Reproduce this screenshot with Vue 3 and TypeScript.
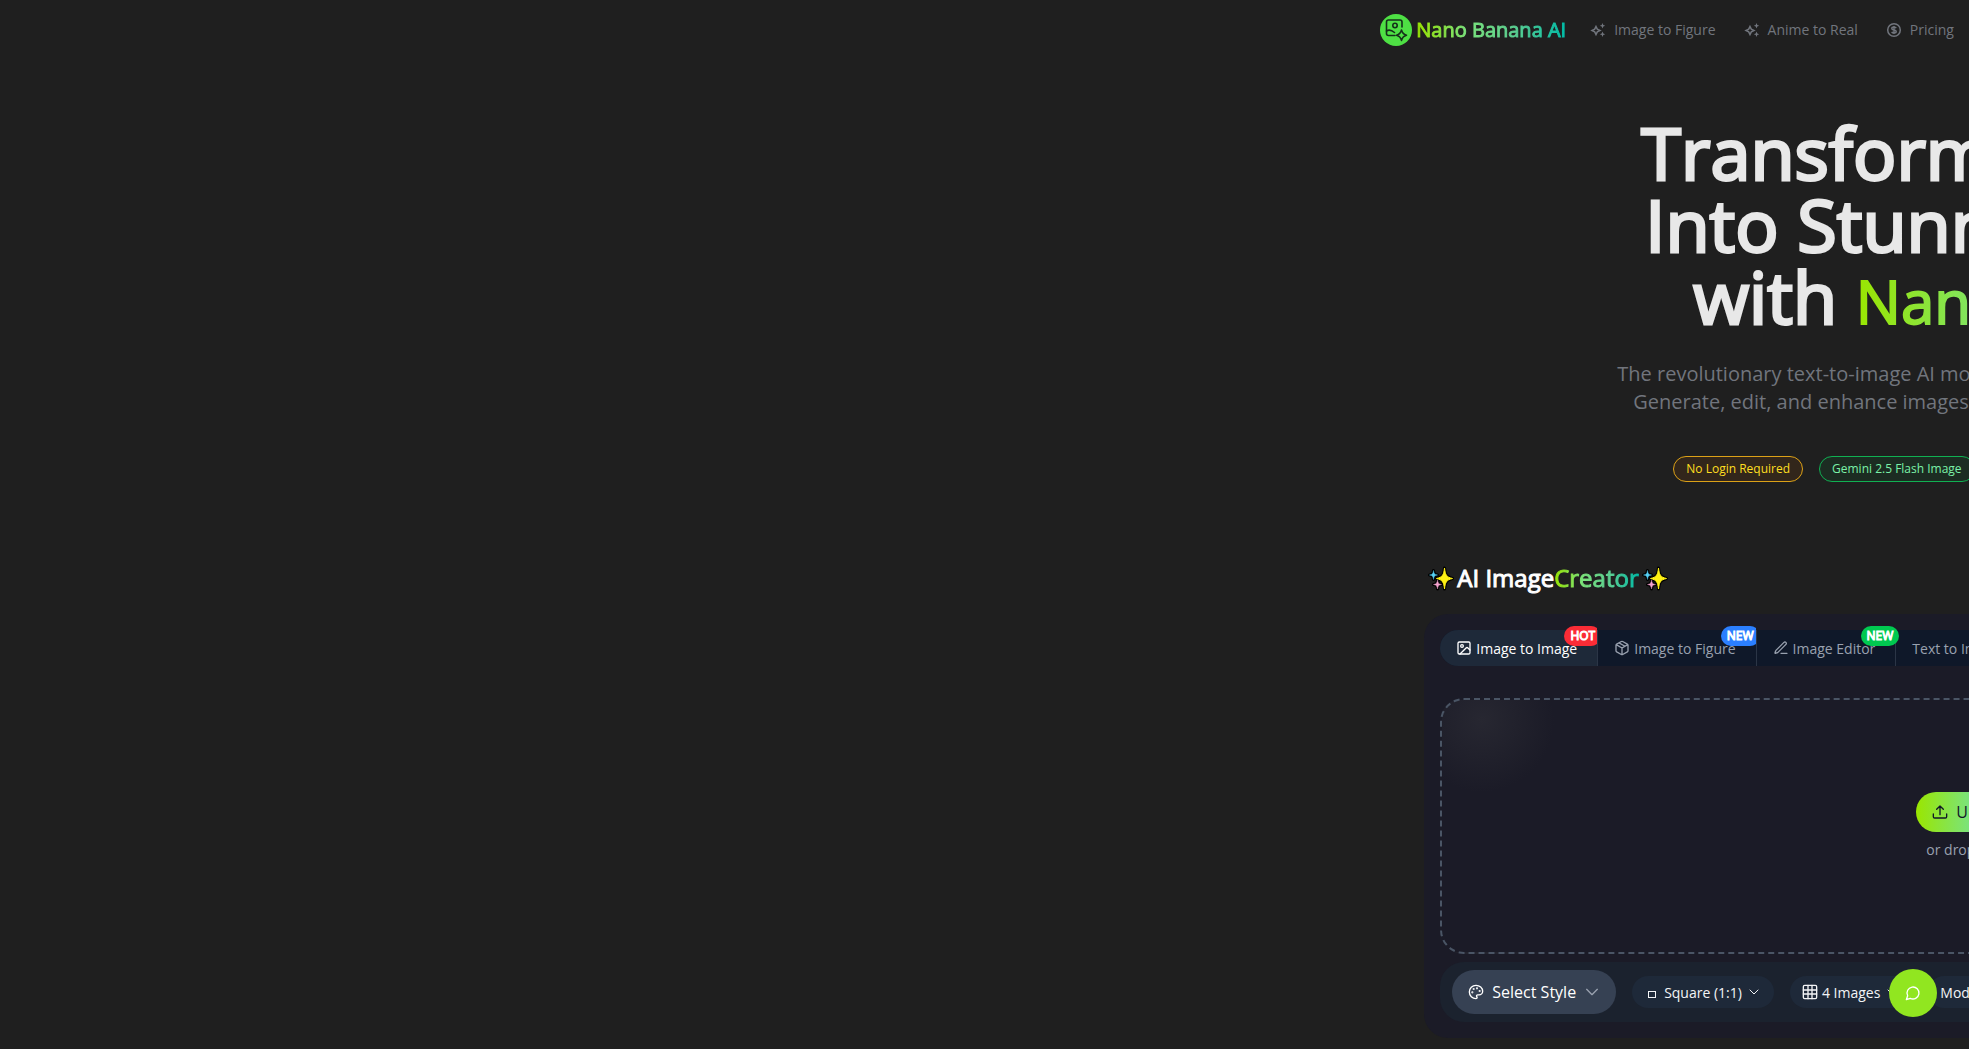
<script setup lang="ts">
interface NavItem { label: string; icon: 'sparkles' | 'coin' }
interface Tab { label: string; icon?: 'image' | 'box' | 'pen'; badge?: string; tone?: string; clipped?: boolean }

const navItems: NavItem[] = [
  { label: 'Image to Figure', icon: 'sparkles' },
  { label: 'Anime to Real', icon: 'sparkles' },
  { label: 'Pricing', icon: 'coin' },
]
const tabs: Tab[] = [
  { label: 'Image to Image', icon: 'image', badge: 'HOT', tone: 'red', clipped: true },
  { label: 'Image to Figure', icon: 'box', badge: 'NEW', tone: 'blue', clipped: true },
  { label: 'Image Editor', icon: 'pen', badge: 'NEW', tone: 'green' },
  { label: 'Text to Image' },
]
</script>

<template>
  <div class="page">
    <div class="shell">
      <header class="topbar">
        <a class="brand" href="#">
          <svg class="brand-logo" viewBox="0 0 32 32" fill="none" stroke="#15301a" stroke-width="1.6" stroke-linecap="round" stroke-linejoin="round">
            <circle cx="16" cy="16" r="16" fill="#4ee044" stroke="none" />
            <path d="M15 21.500H8.500a2 2 0 0 1-2-2V8a2 2 0 0 1 2-2H20a2 2 0 0 1 2 2v5" />
            <circle cx="15" cy="11.500" r="2.200" />
            <path d="M6.500 17c3-2 5-1 8 1.500" />
            <path d="M21.500 16c.8 3.200 2 4.400 5 5.200-3 .8-4.200 2-5 5.200-.8-3.200-2-4.400-5-5.200 3-.8 4.200-2 5-5.200Z" />
          </svg>
          <span class="gradient">Nano Banana AI</span>
        </a>
        <nav class="nav">
          <a v-for="item in navItems" :key="item.label" href="#">
            <svg v-if="item.icon === 'sparkles'" viewBox="0 0 16 16" fill="none" stroke="currentColor" stroke-width="1.500">
              <path d="M6 4.500 7.300 7.200 10 8.500 7.300 9.800 6 12.500 4.700 9.800 2 8.500 4.700 7.200Z" />
              <path d="m12.500 1 .8 1.900 1.900.8-1.900.8-.8 1.900-.8-1.900-1.900-.8 1.900-.8ZM12.500 9.500l.8 1.900 1.900.8-1.900.8-.8 1.900-.8-1.900-1.900-.8 1.900-.8Z" fill="currentColor" stroke="none" />
            </svg>
            <svg v-else viewBox="0 0 16 16" fill="none" stroke="currentColor" stroke-width="1.500">
              <circle cx="8" cy="8" r="6.300" />
              <path d="M10.200 6.200C9.800 5.400 9 5 8 5 6.700 5 5.800 5.600 5.800 6.600c0 2.200 4.400.8 4.400 2.900C10.200 10.400 9.300 11 8 11c-1 0-1.900-.4-2.300-1.200M8 4v8" />
            </svg>
            {{ item.label }}
          </a>
        </nav>
      </header>

      <section class="hero">
        <h1>
          <span class="line">Transform Your Ideas</span>
          <span class="line second">Into Stunning Images</span>
          <span class="line third">with <span class="gradient hero-name">Nano Banana AI</span></span>
        </h1>
        <p>
          <span class="line">The revolutionary text-to-image AI model that creates</span>
          <span class="line sub">Generate, edit, and enhance images with simple text</span>
        </p>
        <div class="pills">
          <span class="pill amber">No Login Required</span>
          <span class="pill green">Gemini 2.5 Flash Image</span>
        </div>
      </section>

      <main class="creator">
        <h2>
          <svg v-for="n in 2" :key="n" class="stars" :class="{ last: n === 2 }" viewBox="0 0 24 24">
            <g fill="#000" stroke="#000" stroke-width="3" stroke-linejoin="round">
              <path d="M15.500 2c.8 6.500 1.500 9 8 10.500-6.500 1.500-7.200 4-8 10.500-.8-6.500-1.500-9-8-10.500 6.500-1.500 7.200-4 8-10.500Z" />
              <path d="M4.500 4.500c.5 3 1 4 4 4.500-3 .5-3.500 1.500-4 4.500-.5-3-1-4-4-4.500 3-.5 3.500-1.500 4-4.500ZM8.500 14c.5 3 1 4 4 4.500-3 .5-3.500 1.500-4 4.500-.5-3-1-4-4-4.500 3-.5 3.500-1.500 4-4.500Z" />
            </g>
            <path fill="#fff114" stroke="#fff114" stroke-width="1" d="M15.500 2c.8 6.500 1.500 9 8 10.500-6.500 1.500-7.200 4-8 10.500-.8-6.500-1.500-9-8-10.500 6.500-1.500 7.200-4 8-10.500Z" />
            <path fill="#55d0f5" stroke="#55d0f5" stroke-width=".4" d="M4.500 4.500c.5 3 1 4 4 4.500-3 .5-3.500 1.500-4 4.500-.5-3-1-4-4-4.500 3-.5 3.500-1.500 4-4.500Z" />
            <path fill="#f5a3cf" stroke="#f5a3cf" stroke-width=".4" d="M8.500 14c.5 3 1 4 4 4.500-3 .5-3.500 1.500-4 4.500-.5-3-1-4-4-4.500 3-.5 3.500-1.500 4-4.500Z" />
          </svg>
          <span class="title">AI Image<span class="gradient creator-name">Creator</span></span>
        </h2>

        <div class="card">
          <div class="tabs" role="tablist">
            <button v-for="(tab, i) in tabs" :key="tab.label" type="button" role="tab" class="tab" :class="{ active: i === 0 }" :aria-selected="i === 0">
              <svg v-if="tab.icon" class="line-icon" viewBox="0 0 24 24">
                <template v-if="tab.icon === 'image'">
                  <rect x="3" y="3" width="18" height="18" rx="2" /><circle cx="9" cy="9" r="2" /><path d="m21 15-3.100-3.100a2 2 0 0 0-2.800 0L6 21" />
                </template>
                <template v-else-if="tab.icon === 'box'">
                  <path d="M11 21.700a2 2 0 0 0 2 0l7-4a2 2 0 0 0 1-1.700V8a2 2 0 0 0-1-1.700l-7-4a2 2 0 0 0-2 0l-7 4A2 2 0 0 0 3 8v8a2 2 0 0 0 1 1.700ZM12 22V12M3.300 7 12 12l8.700-5M7.500 4.300l9 5.100" />
                </template>
                <path v-else d="M12 20h9M16.400 3.600a1 1 0 0 1 3 3L7.400 18.600a2 2 0 0 1-.9.500l-2.900.9a.5.5 0 0 1-.6-.6l.9-2.900a2 2 0 0 1 .5-.9Z" />
              </svg>
              {{ tab.label }}
              <span v-if="tab.badge" class="badge-area" :class="{ clipped: tab.clipped }"><span class="badge" :class="tab.tone">{{ tab.badge }}</span></span>
            </button>
          </div>

          <div class="dropzone">
            <button type="button" class="upload">
              <svg class="line-icon" viewBox="0 0 24 24"><path d="M12 16V3M7 8l5-5 5 5M2 15v4a2 2 0 0 0 2 2h16a2 2 0 0 0 2-2v-4" /></svg>
              Upload Image
            </button>
            <span class="hint">or drop image here</span>
          </div>

          <div class="toolbar">
            <button type="button" class="style-button">
              <svg class="line-icon" viewBox="0 0 24 24">
                <path d="M12 2a10 10 0 0 0 0 20c1 0 1.700-.8 1.700-1.700 0-.5-.2-.8-.5-1.100-.3-.3-.4-.7-.4-1.100a1.600 1.600 0 0 1 1.700-1.700h2c3 0 5.500-2.500 5.500-5.500C22 6 17.500 2 12 2Z" />
                <circle cx="13.500" cy="6.500" r=".6" /><circle cx="17.500" cy="10.500" r=".6" /><circle cx="8.500" cy="7.500" r=".6" /><circle cx="6.500" cy="12.500" r=".6" />
              </svg>
              Select Style
              <svg class="line-icon muted" viewBox="0 0 24 24"><path d="m4 8 8 8 8-8" /></svg>
            </button>
            <button type="button" class="option">
              <span class="square"></span>
              Square (1:1)
              <svg class="line-icon chevron" viewBox="0 0 24 24"><path d="m4 8 8 8 8-8" /></svg>
            </button>
            <button type="button" class="option">
              <svg class="line-icon" viewBox="0 0 24 24"><rect x="2" y="2" width="20" height="20" rx="2" /><path d="M2 9h20M2 15h20M9 2v20M15 2v20" /></svg>
              4 Images
              <svg class="line-icon chevron" viewBox="0 0 24 24"><path d="m4 8 8 8 8-8" /></svg>
            </button>
            <button type="button" class="option">Model</button>
          </div>
        </div>
      </main>
    </div>

    <button type="button" class="chat" aria-label="Chat">
      <svg class="line-icon" viewBox="0 0 24 24"><path d="M7.900 20A9 9 0 1 0 4 16.100L2 22Z" /></svg>
    </button>
  </div>
</template>

<style>
body {
  margin: 0;
  background: #1f1f1f;
}
</style>

<style scoped>
.page {
  position: relative;
  min-height: 100vh;
  overflow: hidden;
  background: #1f1f1f;
  color: #e8e8e8;
  font-family: "Open Sans", "Noto Sans", sans-serif;
}
.page * { box-sizing: border-box; }
.shell {
  width: 1440px;
  margin-left: 70%;
}
button {
  border: 0;
  color: inherit;
  font: inherit;
  white-space: nowrap;
}
a { text-decoration: none; }
svg { flex: none; }
.line-icon {
  width: 16px;
  height: 16px;
  fill: none;
  stroke: currentColor;
  stroke-width: 2;
  stroke-linecap: round;
  stroke-linejoin: round;
}
.gradient {
  background: linear-gradient(90deg, #9ae600, #7be37a 33%, #5bcf92 66%, #00bba7);
  background-clip: text;
  color: transparent;
  -webkit-text-stroke-color: transparent;
}
.topbar {
  display: flex;
  align-items: center;
  gap: 24px;
  height: 60px;
}
.brand {
  display: flex;
  align-items: center;
  gap: 4px;
  margin-left: 2px;
  font-size: 20px;
  font-weight: 400;
  line-height: 28px;
  white-space: nowrap;
  -webkit-text-stroke-width: 1px;
}
.brand-logo {
  width: 32px;
  height: 32px;
}
.nav {
  display: flex;
  gap: 28px;
}
.nav a {
  display: flex;
  align-items: center;
  gap: 8px;
  padding-bottom: 1px;
  color: #71757d;
  font-size: 14px;
  line-height: 20px;
  white-space: nowrap;
}
.nav svg {
  width: 16px;
  height: 16px;
}
.line {
  display: block;
  white-space: nowrap;
}
.hero { padding: 56px 0 0 239px; }
h1 {
  margin: 0 0 0 24px;
  font-size: 72px;
  font-weight: 400;
  line-height: 72px;
  -webkit-text-stroke: 3px #e8e8e8;
}
.second { padding-left: 4px; }
.third { padding-left: 52px; }
.hero-name {
  font-size: 60px;
  line-height: 60px;
  -webkit-text-stroke: 2px transparent;
}
.hero p {
  margin: 28px 0 0;
  color: #71757d;
  font-size: 20px;
  line-height: 28px;
}
.sub { padding-left: 16px; }
.pills {
  display: flex;
  gap: 16px;
  margin: 40px 0 0 56px;
}
.pill {
  padding: 4px 12px;
  border: 1px solid;
  border-radius: 13px;
  font-size: 12px;
  line-height: 16px;
  white-space: nowrap;
}
.amber {
  border-color: #dca117;
  background: #32261b;
  color: #ffdf20;
}
.pill.green {
  border-color: #10b052;
  background: #1c2c22;
  color: #7bf1a8;
}
.creator { padding: 78px 0 0 46px; }
h2 {
  display: flex;
  align-items: center;
  gap: 4px;
  margin: 0 0 18px 5px;
  color: #fff;
  font-size: 24px;
  font-weight: 400;
  line-height: 36px;
}
.title { -webkit-text-stroke: 1px #fff; }
.stars {
  width: 24px;
  height: 24px;
  overflow: visible;
}
.last { order: 1; }
.creator-name { -webkit-text-stroke: 1px transparent; }
.card {
  padding: 16px;
  border-radius: 24px;
  background: #1b1b27;
}
.tabs {
  display: flex;
  width: 1000px;
  height: 36px;
  border-radius: 18px;
  background: #0f1829;
}
.tab {
  position: relative;
  display: flex;
  align-items: center;
  gap: 4px;
  padding: 0 20px 0 16px;
  border-right: 1px solid #2b3546;
  background: transparent;
  color: #99a1af;
  font-size: 14px;
}
.active {
  border-radius: 18px 0 0 18px;
  background: #1e2939;
  color: #fff;
}
.badge-area {
  position: absolute;
  inset: -4px -4px 0 auto;
  width: 48px;
  pointer-events: none;
}
.clipped {
  right: 0;
  width: 48px;
  overflow: hidden;
}
.badge {
  position: absolute;
  top: 0;
  right: 0;
  padding: 2px 6px;
  border-radius: 10px;
  color: #fff;
  font-size: 12px;
  line-height: 16px;
  -webkit-text-stroke: 1px #fff;
}
.clipped .badge { right: -4px; }
.red { background: #fb2c36; }
.blue { background: #2b7fff; }
.badge.green { background: #00c950; }
.dropzone {
  display: flex;
  flex-direction: column;
  align-items: flex-start;
  height: 256px;
  margin-top: 32px;
  padding: 92px 0 0 474px;
  border: 2px dashed #4a5565;
  border-radius: 24px;
  background: radial-gradient(circle at 40px 20px, #272731, #1b1b27 72px);
}
.upload {
  display: flex;
  align-items: center;
  gap: 8px;
  height: 40px;
  padding: 0 16px;
  border-radius: 20px;
  background: linear-gradient(90deg, #9ae600, #7be37a 33%, #5bcf92 66%, #00bba7);
  color: #111827;
  font-size: 16px;
}
.hint {
  margin: 8px 0 0 10px;
  color: #99a1af;
  font-size: 14px;
  line-height: 20px;
}
.toolbar {
  display: flex;
  align-items: center;
  gap: 16px;
  height: 60px;
  margin-top: 8px;
  padding: 0 12px;
  border-radius: 24px;
  background: #1b222e;
}
.style-button {
  display: flex;
  align-items: center;
  gap: 8px;
  height: 44px;
  padding: 0 16px;
  border-radius: 22px;
  background: #364153;
  color: #fff;
  font-size: 16px;
}
.muted { color: #99a1af; }
.option {
  display: flex;
  align-items: center;
  gap: 4px;
  height: 32px;
  padding: 0 12px;
  border-radius: 16px;
  background: #1e2939;
  color: #f3f4f6;
  font-size: 14px;
}
.square {
  width: 8px;
  height: 7px;
  margin: 4px 4px 0;
  border: 1px solid;
}
.chevron {
  width: 12px;
  height: 12px;
  margin: 0 2px;
}
.chat {
  position: absolute;
  right: 32px;
  bottom: 32px;
  display: grid;
  place-items: center;
  width: 48px;
  height: 48px;
  border-radius: 50%;
  background: #91e620;
  color: #fff;
}
</style>
